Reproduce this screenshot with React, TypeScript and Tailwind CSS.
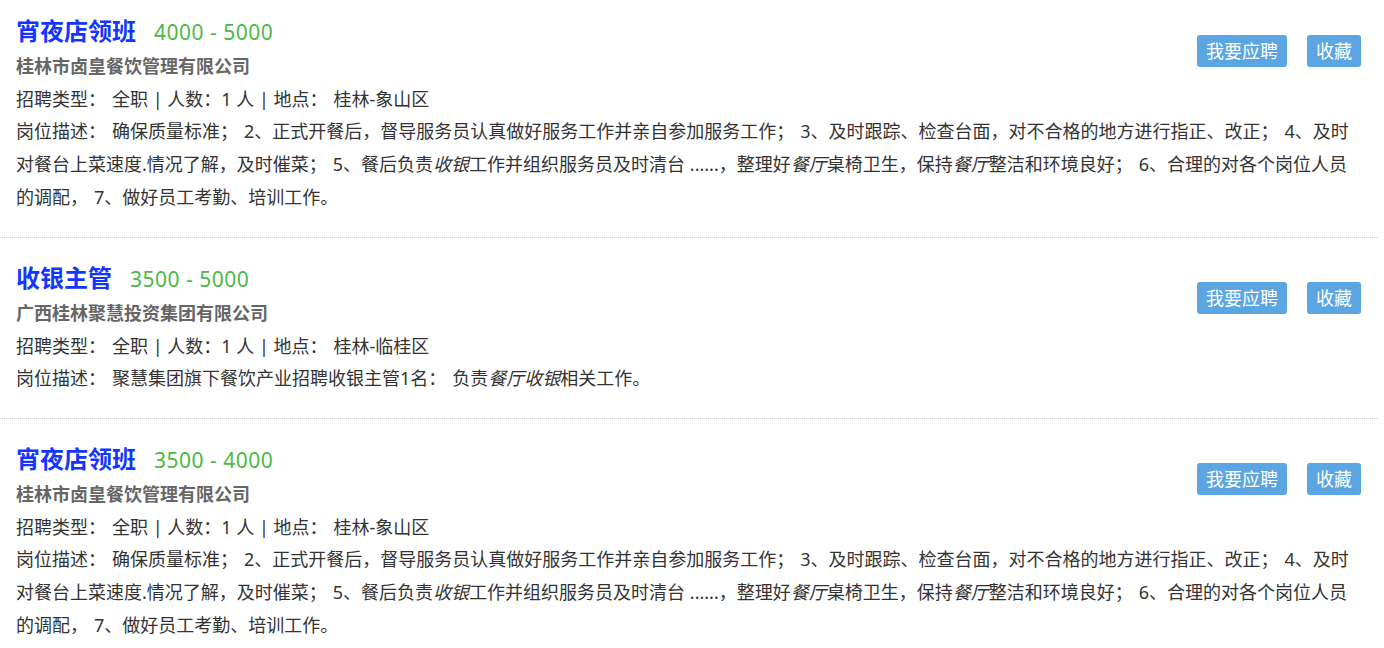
import React from "react";

type Seg = string | { em: string };

type Job = {
  title: string;
  salary: string;
  company: string;
  place: string;
  desc: Seg[][];
};

const S = "\u2004";

const jobs: Job[] = [
  {
    title: "宵夜店领班",
    salary: "4000 - 5000",
    company: "桂林市卤皇餐饮管理有限公司",
    place: "桂林-象山区",
    desc: [
      [`岗位描述：${S}确保质量标准；${S}2、正式开餐后，督导服务员认真做好服务工作并亲自参加服务工作；${S}3、及时跟踪、检查台面，对不合格的地方进行指正、改正；${S}4、及时`],
      [
        `对餐台上菜速度.情况了解，及时催菜；${S}5、餐后负责`,
        { em: "收银" },
        "工作并组织服务员及时清台 ......，整理好",
        { em: "餐厅" },
        "桌椅卫生，保持",
        { em: "餐厅" },
        `整洁和环境良好；${S}6、合理的对各个岗位人员`,
      ],
      [`的调配，${S}7、做好员工考勤、培训工作。`],
    ],
  },
  {
    title: "收银主管",
    salary: "3500 - 5000",
    company: "广西桂林聚慧投资集团有限公司",
    place: "桂林-临桂区",
    desc: [
      [
        `岗位描述：${S}聚慧集团旗下餐饮产业招聘收银主管1名：${S}负责`,
        { em: "餐厅收银" },
        "相关工作。",
      ],
    ],
  },
  {
    title: "宵夜店领班",
    salary: "3500 - 4000",
    company: "桂林市卤皇餐饮管理有限公司",
    place: "桂林-象山区",
    desc: [
      [`岗位描述：${S}确保质量标准；${S}2、正式开餐后，督导服务员认真做好服务工作并亲自参加服务工作；${S}3、及时跟踪、检查台面，对不合格的地方进行指正、改正；${S}4、及时`],
      [
        `对餐台上菜速度.情况了解，及时催菜；${S}5、餐后负责`,
        { em: "收银" },
        "工作并组织服务员及时清台 ......，整理好",
        { em: "餐厅" },
        "桌椅卫生，保持",
        { em: "餐厅" },
        `整洁和环境良好；${S}6、合理的对各个岗位人员`,
      ],
      [`的调配，${S}7、做好员工考勤、培训工作。`],
    ],
  },
];

function JobItem({ job, first }: { job: Job; first: boolean }) {
  return (
    <div
      className={
        "border-b border-dotted border-[#c8c8c8] px-4 pb-[23px] " +
        (first ? "pt-[11px]" : "pt-[20px]")
      }
    >
      <div className="float-right mt-[24px] flex gap-5">
        <button className="h-[32px] rounded-[3px] bg-[#5ca5e3] px-[9px] text-[18px] leading-[32px] text-white">
          我要应聘
        </button>
        <button className="h-[32px] rounded-[3px] bg-[#5ca5e3] px-[9px] text-[18px] leading-[32px] text-white">
          收藏
        </button>
      </div>
      <div className="flex h-[40px] items-baseline leading-[40px]">
        <span className="text-[24px] font-bold text-[#1236ff]">{job.title}</span>
        <span className="ml-[18px] text-[21px] tracking-[0.5px] text-[#4db845]">{job.salary}</span>
      </div>
      <div className="text-[18px] font-bold leading-[30px] text-[#666]">{job.company}</div>
      <div className="mt-[2px] text-[18px] leading-[32px] text-[#333]">
        招聘类型：{S}全职 | 人数：1 人 | 地点：{S}{job.place}
      </div>
      <div className="text-[18px] leading-[33px] text-[#333]">
        {job.desc.map((line, i) => (
          <React.Fragment key={i}>
            {line.map((seg, j) =>
              typeof seg === "string" ? (
                <React.Fragment key={j}>{seg}</React.Fragment>
              ) : (
                <em key={j} className="italic">
                  {seg.em}
                </em>
              )
            )}
            {i < job.desc.length - 1 && <br />}
          </React.Fragment>
        ))}
      </div>
    </div>
  );
}

export default function App() {
  return (
    <div className="min-h-[648px] w-[1384px] bg-white font-['Noto_Sans','Noto_Sans_CJK_SC',sans-serif]">
      <div className="w-[1377px]">
        {jobs.map((job, i) => (
          <JobItem key={i} job={job} first={i === 0} />
        ))}
      </div>
    </div>
  );
}
